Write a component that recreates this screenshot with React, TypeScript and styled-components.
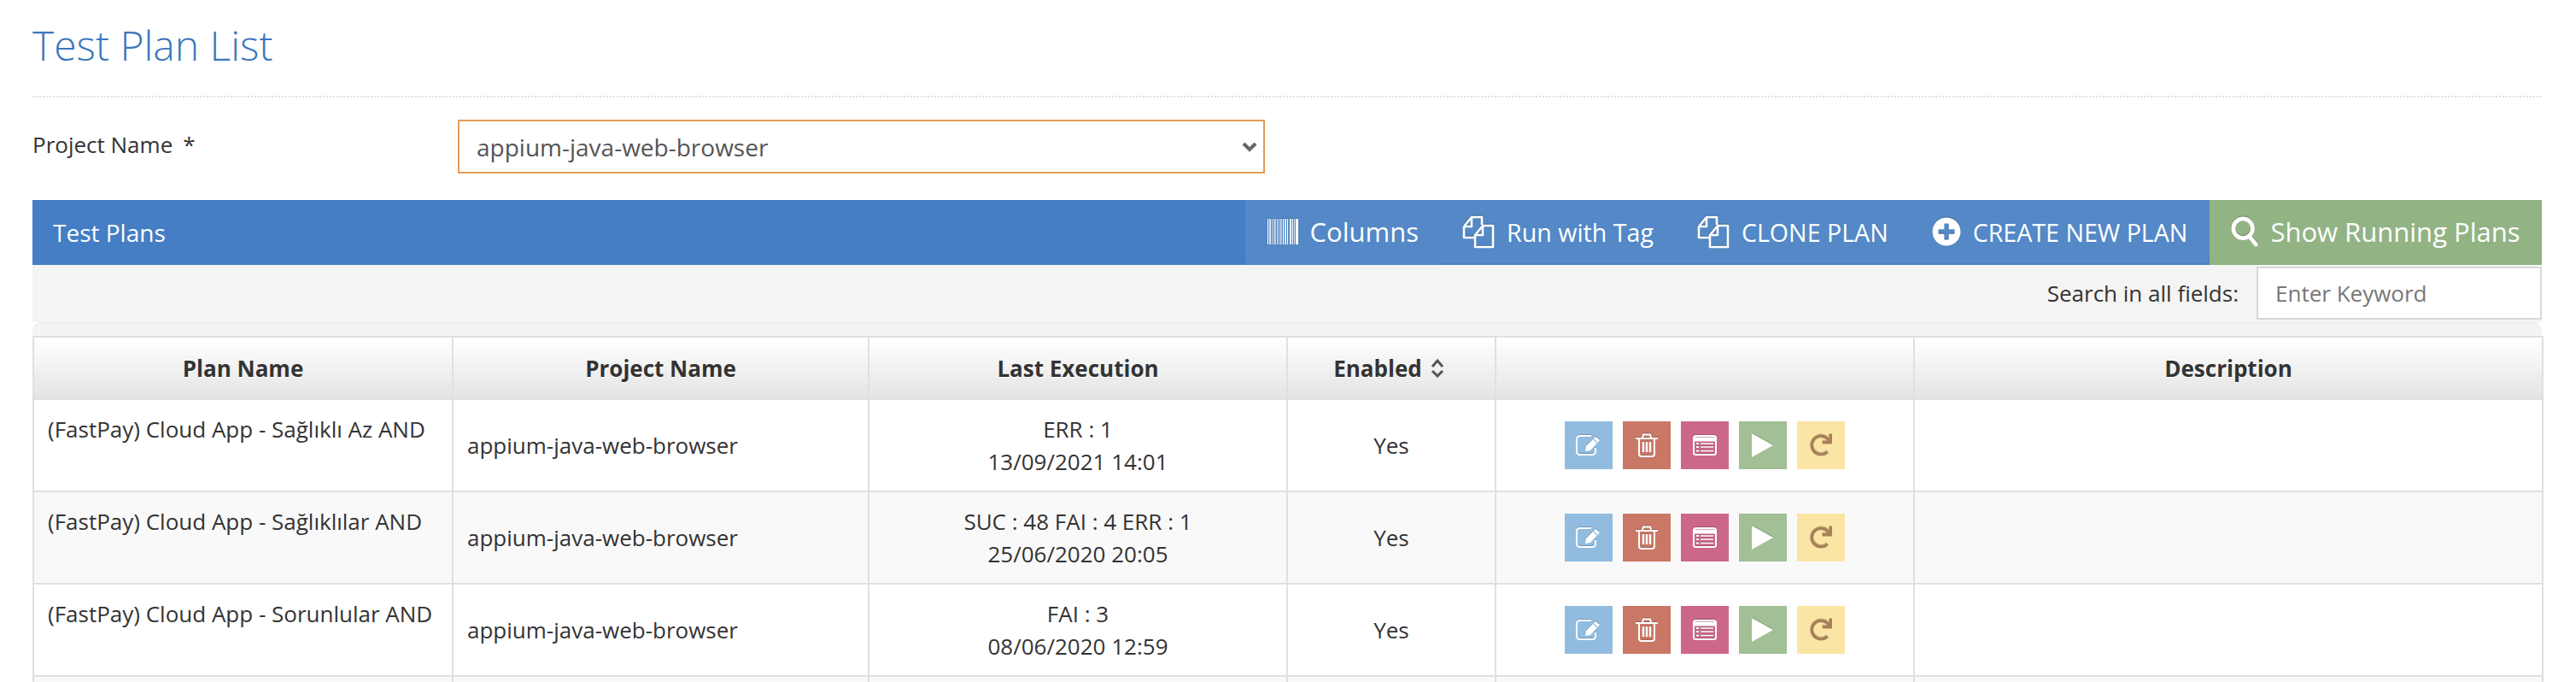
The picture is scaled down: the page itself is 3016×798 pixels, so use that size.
import React from "react";
import styled, { createGlobalStyle } from "styled-components";
import { FaPlusCircle, FaRedo } from "react-icons/fa";

const GlobalStyle = createGlobalStyle`
  html, body {
    margin: 0;
    height: 798px;
    overflow: hidden;
    background: #fff;
    font-family: "Open Sans", "Noto Sans", sans-serif;
    color: #333;
  }
  * {
    box-sizing: border-box;
  }
`;

const rows = [
  { plan: "(FastPay) Cloud App - Sağlıklı Az AND", result: "ERR : 1", date: "13/09/2021 14:01" },
  { plan: "(FastPay) Cloud App - Sağlıklılar AND", result: "SUC : 48 FAI : 4 ERR : 1", date: "25/06/2020 20:05" },
  { plan: "(FastPay) Cloud App - Sorunlular AND", result: "FAI : 3", date: "08/06/2020 12:59" },
];

const chevron =
  "url(\"data:image/svg+xml,%3Csvg xmlns='http://www.w3.org/2000/svg' width='18' height='12' viewBox='0 0 18 12'%3E%3Cpath d='M2 2 L9 9 L16 2' fill='none' stroke='%23666' stroke-width='4'/%3E%3C/svg%3E\")";

const FilesIcon = () => (
  <svg width="38" height="40" viewBox="0 0 38 40" fill="none" stroke="#fff" strokeWidth="2.6" strokeLinejoin="round">
    <path d="M2 14 L11 3 H23 V12 M2 14 V27 H14 M2 14 H11 V3" />
    <path d="M15 24 L24 13 H36 V38 H15 Z M15 24 H24 V13" />
  </svg>
);

const BarcodeIcon = () => (
  <svg width="36" height="30" viewBox="0 0 36 30" fill="#fff">
    <rect x="0" width="1" height="30" />
    <rect x="2" width="2" height="30" opacity="0.8" />
    <rect x="5" width="1" height="30" opacity="0.7" />
    <rect x="7" width="3" height="30" opacity="0.6" />
    <rect x="11" width="2" height="30" opacity="0.6" />
    <rect x="14" width="3" height="30" opacity="0.55" />
    <rect x="18" width="1" height="30" />
    <rect x="20" width="2" height="30" opacity="0.8" />
    <rect x="23" width="1" height="30" />
    <rect x="26" width="2" height="30" opacity="0.9" />
    <rect x="29" width="1" height="30" />
    <rect x="31" width="1" height="30" opacity="0.8" />
    <rect x="33" width="3" height="30" />
  </svg>
);

const SearchIcon = () => (
  <svg width="32" height="38" viewBox="0 0 34 38" fill="none" stroke="#fff">
    <circle cx="15" cy="15" r="12" strokeWidth="5" />
    <path d="M23 25 L31 35" strokeWidth="5" strokeLinecap="round" />
  </svg>
);

const EditIcon = () => (
  <svg width="30" height="24" viewBox="0 0 30 24" fill="none" stroke="#fff">
    <path d="M23 15 V19 Q23 23 19 23 H5 Q1 23 1 19 V5 Q1 1 5 1 H18" strokeWidth="2" />
    <path d="M12 13 L23 2 L28 6 L17 18 L11 19 Z" fill="#fff" stroke="none" />
    <path d="M21 5 L25 9" stroke="#91bce0" strokeWidth="1.2" />
  </svg>
);

const TrashIcon = () => (
  <svg width="26" height="28" viewBox="0 0 26 28" fill="none" stroke="#fff" strokeWidth="2">
    <path d="M0 6 H26" />
    <path d="M8 5 L9 1.5 H17 L18 5" />
    <path d="M4 6 V24 Q4 27 7 27 H19 Q22 27 22 24 V6" />
    <path d="M9 10 V22 M13 10 V22 M17 10 V22" strokeWidth="2.4" />
  </svg>
);

const ListIcon = () => (
  <svg width="28" height="24" viewBox="0 0 28 24" fill="none" stroke="#fff" strokeWidth="2">
    <rect x="1" y="1" width="26" height="22" rx="2.5" />
    <path d="M1 5 H27" strokeWidth="5" />
    <path d="M9 10 H24 M9 14 H24 M9 18.5 H24" strokeWidth="1.6" />
    <path d="M4 10 H7 M4 14 H7 M4 18.5 H7" strokeWidth="2" />
  </svg>
);

const PlayIcon = () => (
  <svg width="26" height="28" viewBox="0 0 26 28" fill="#fff">
    <polygon points="0,0 25,14 0,28" />
  </svg>
);

const SortIcon = () => (
  <svg width="16" height="24" viewBox="0 0 16 24" fill="none" stroke="#555" strokeWidth="3">
    <path d="M2 10 L8 3 L14 10" />
    <path d="M2 15 L8 21 L14 15" />
  </svg>
);

const App = () => {
  return (
    <Page>
      <GlobalStyle />
      <PageHeader>
        <Title>Test Plan List</Title>
      </PageHeader>
      <FormRow>
        <FormLabel>
          Project Name<Required>*</Required>
        </FormLabel>
        <ProjectSelect defaultValue="appium-java-web-browser">
          <option>appium-java-web-browser</option>
        </ProjectSelect>
      </FormRow>
      <Bar>
        <BarTitle>Test Plans</BarTitle>
        <BarActions>
          <BarButton $size={31}>
            <BarcodeIcon />
            Columns
          </BarButton>
          <BarButton $underline>
            <FilesIcon />
            Run with Tag
          </BarButton>
          <BarButton $underline>
            <FilesIcon />
            CLONE PLAN
          </BarButton>
          <BarButton $underline>
            <FaPlusCircle size={34} />
            CREATE NEW PLAN
          </BarButton>
          <BarButton $size={31} $green>
            <SearchIcon />
            Show Running Plans
          </BarButton>
        </BarActions>
      </Bar>
      <SearchRow>
        <SearchLabel>Search in all fields:</SearchLabel>
        <SearchInput placeholder="Enter Keyword" />
      </SearchRow>
      <TableWrap>
        <Table>
          <colgroup>
            <col style={{ width: 491 }} />
            <col style={{ width: 487 }} />
            <col style={{ width: 490 }} />
            <col style={{ width: 244 }} />
            <col style={{ width: 490 }} />
            <col style={{ width: 736 }} />
          </colgroup>
          <thead>
            <tr>
              <HeadCell>Plan Name</HeadCell>
              <HeadCell>Project Name</HeadCell>
              <HeadCell>Last Execution</HeadCell>
              <HeadCell>
                <SortLabel>
                  Enabled
                  <SortIcon />
                </SortLabel>
              </HeadCell>
              <HeadCell />
              <HeadCell>Description</HeadCell>
            </tr>
          </thead>
          <tbody>
            {rows.map((row) => (
              <Row key={row.plan}>
                <PlanCell>{row.plan}</PlanCell>
                <Cell>appium-java-web-browser</Cell>
                <CenterCell>
                  <ExecLine>{row.result}</ExecLine>
                  <ExecLine>{row.date}</ExecLine>
                </CenterCell>
                <CenterCell>Yes</CenterCell>
                <CenterCell>
                  <Actions>
                    <ActionButton $bg="#91bce0">
                      <EditIcon />
                    </ActionButton>
                    <ActionButton $bg="#c97866">
                      <TrashIcon />
                    </ActionButton>
                    <ActionButton $bg="#cc678b">
                      <ListIcon />
                    </ActionButton>
                    <ActionButton $bg="#a2bf95">
                      <PlayIcon />
                    </ActionButton>
                    <ActionButton $bg="#fbe5a5" $fg="#a88158">
                      <FaRedo size={26} />
                    </ActionButton>
                  </Actions>
                </CenterCell>
                <Cell />
              </Row>
            ))}
            <Row>
              <Cell />
              <Cell />
              <Cell />
              <Cell />
              <Cell />
              <Cell />
            </Row>
          </tbody>
        </Table>
      </TableWrap>
    </Page>
  );
};

const Page = styled.div`
  padding: 0 40px 0 38px;
  width: 3016px;
`;

const PageHeader = styled.div`
  display: flex;
  align-items: center;
  height: 114px;
  border-bottom: 2px dotted #e0e0e0;
`;

const Title = styled.h1`
  margin: 0 0 6px;
  font-size: 48px;
  font-weight: 300;
  line-height: 1.2;
  color: #3a77bd;
`;

const FormRow = styled.div`
  display: flex;
  align-items: center;
  margin-top: 26px;
  height: 63px;
`;

const FormLabel = styled.label`
  width: 498px;
  padding-bottom: 6px;
  font-size: 26px;
  color: #333;
`;

const Required = styled.span`
  margin-left: 12px;
`;

const ProjectSelect = styled.select`
  width: 945px;
  height: 63px;
  padding: 0 16px 0 20px;
  border: 2px solid #e59a55;
  border-radius: 0;
  outline: none;
  appearance: none;
  background: #fff ${chevron} no-repeat right 7px center;
  font-family: inherit;
  font-size: 28px;
  color: #555;
`;

const Bar = styled.div`
  display: flex;
  justify-content: space-between;
  height: 76px;
  margin-top: 31px;
  background: #457ec5;
`;

const BarTitle = styled.div`
  display: flex;
  align-items: center;
  padding-left: 24px;
  font-size: 28px;
  color: #fff;
`;

const BarActions = styled.div`
  display: flex;
`;

const BarButton = styled.div<{ $size?: number; $underline?: boolean; $green?: boolean }>`
  display: flex;
  align-items: center;
  gap: 14px;
  padding: 0 25.5px;
  background: ${(p) => (p.$green ? "#92b384" : "#5488c6")};
  border-bottom: 2px solid ${(p) => (p.$underline ? "#4a80c4" : "transparent")};
  font-size: ${(p) => p.$size ?? 28.6}px;
  color: #fff;
  white-space: nowrap;

  > svg {
    flex: none;
    filter: drop-shadow(0 -1px 0 rgba(0, 0, 0, 0.25));
  }
`;

const SearchRow = styled.div`
  display: flex;
  justify-content: flex-end;
  align-items: center;
  gap: 21px;
  height: 67px;
  padding-bottom: 2px;
  background: #f4f4f4;
`;

const SearchLabel = styled.label`
  font-size: 26px;
  color: #333;
`;

const SearchInput = styled.input`
  width: 334px;
  height: 62px;
  padding: 0 20px;
  border: 2px solid #d8d8d8;
  outline: none;
  background: #fff;
  font-family: inherit;
  font-size: 26px;

  &::placeholder {
    color: #777;
    opacity: 1;
  }
`;

const TableWrap = styled.div`
  padding-top: 16px;
  background: #f4f4f4;
  border-radius: 10px 10px 0 0;
  box-shadow: inset 0 2px 0 #eee;
`;

const Table = styled.table`
  width: 100%;
  table-layout: fixed;
  border-collapse: collapse;
  background: #fff;
`;

const HeadCell = styled.th`
  height: 73px;
  padding: 0 10px;
  border: 2px solid #e0e0e0;
  background: linear-gradient(to bottom, #ffffff, #e4e4e4);
  font-size: 26px;
  font-weight: 700;
  color: #333;
  text-shadow: 0 1px 0 #fff;
`;

const SortLabel = styled.span`
  display: inline-flex;
  align-items: center;
  gap: 10px;
  margin-right: 6px;
`;

const Row = styled.tr`
  height: 108px;

  &:nth-child(even) {
    background: #f9f9f9;
  }
`;

const Cell = styled.td`
  padding: 0 16px;
  border: 2px solid #e0e0e0;
  font-size: 26px;
  color: #333;
  vertical-align: middle;
`;

const PlanCell = styled(Cell)`
  vertical-align: top;
  padding-top: 16px;
  white-space: nowrap;
`;

const CenterCell = styled(Cell)`
  text-align: center;
`;

const ExecLine = styled.div`
  line-height: 38px;
`;

const Actions = styled.div`
  display: flex;
  justify-content: center;
  gap: 12px;
`;

const ActionButton = styled.div<{ $bg: string; $fg?: string }>`
  display: flex;
  align-items: center;
  justify-content: center;
  width: 56px;
  height: 56px;
  background: ${(p) => p.$bg};
  color: ${(p) => p.$fg ?? "#fff"};

  > svg {
    filter: drop-shadow(0 -1px 0 rgba(0, 0, 0, 0.2));
  }
`;

export default App;
